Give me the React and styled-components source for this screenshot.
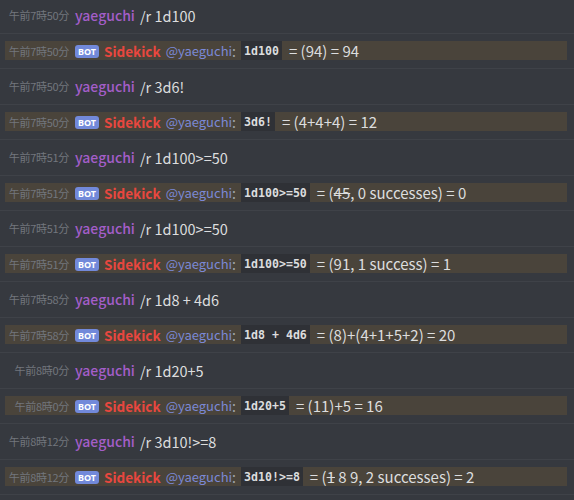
import React from "react"
import styled, { createGlobalStyle } from "styled-components"

const GlobalStyle = createGlobalStyle`
  html, body {
    margin: 0;
    padding: 0;
    background: #36393f;
    overflow: hidden;
  }
  body {
    font-family: "Noto Sans CJK JP", "Noto Sans", sans-serif;
  }
`

const Log = styled.div`
  width: 574px;
  height: 500px;
  overflow: hidden;
  background: #36393f;
`

const List = styled.div`
  margin-top: -2px;
`

const Row = styled.div`
  box-sizing: border-box;
  height: 35.5px;
  display: flex;
  align-items: center;
  padding: 0 7px 0 5px;
  border-bottom: 1px solid #3f4248;
`

const Band = styled.div`
  flex: 1;
  display: flex;
  align-items: center;
  height: 19px;
  background: ${(p) => (p.highlight ? "#4a443b" : "transparent")};
  white-space: nowrap;
`

const Time = styled.span`
  width: 64px;
  flex-shrink: 0;
  text-align: right;
  font-size: 11px;
  color: #72767d;
  margin-right: 6px;
  letter-spacing: -0.3px;
`

const UserName = styled.span`
  font-size: 14px;
  font-weight: 500;
  color: #a45ec9;
  margin-right: 5px;
`

const Text = styled.span`
  font-size: 14.5px;
  color: #dcddde;
`

const BotTag = styled.span`
  display: inline-flex;
  align-items: center;
  justify-content: center;
  height: 13px;
  padding: 0 3px;
  border-radius: 3px;
  background: #7289da;
  color: #fff;
  font-family: "Noto Sans", sans-serif;
  font-size: 9px;
  font-weight: 700;
  margin-right: 5px;
  margin-top: 1px;
`

const BotName = styled.span`
  font-size: 13.5px;
  font-weight: 700;
  color: #e8473f;
  margin-right: 5px;
`

const Mention = styled.span`
  font-size: 13px;
  color: #7b89d6;
`

const Colon = styled.span`
  font-size: 14px;
  color: #a3a6aa;
  margin-right: 5px;
`

const Code = styled.code`
  align-self: stretch;
  display: flex;
  align-items: center;
  padding: 0 3px;
  background: #2f3136;
  color: #dcddde;
  font-family: "DejaVu Sans Mono", monospace;
  font-size: 11.6px;
  font-weight: 700;
  white-space: pre;
`

const Result = styled.span`
  flex: 1;
  align-self: stretch;
  display: flex;
  align-items: center;
  padding-left: 7px;
  font-size: 15px;
  color: #dcddde;
  background: #4a443b;
  white-space: pre;
`

const Struck = styled.s`
  text-decoration-thickness: 1px;
`

const rows = [
  { time: "午前7時50分", cmd: "1d100", result: "= (94) = 94" },
  { time: "午前7時50分", cmd: "3d6!", result: "= (4+4+4) = 12" },
  {
    time: "午前7時51分",
    cmd: "1d100>=50",
    result: (
      <>
        = (<Struck>45</Struck>, 0 successes) = 0
      </>
    ),
  },
  { time: "午前7時51分", cmd: "1d100>=50", result: "= (91, 1 success) = 1" },
  { time: "午前7時58分", cmd: "1d8 + 4d6", result: "= (8)+(4+1+5+2) = 20" },
  { time: "午前8時0分", cmd: "1d20+5", result: "= (11)+5 = 16" },
  {
    time: "午前8時12分",
    cmd: "3d10!>=8",
    result: (
      <>
        = (<Struck>1</Struck> 8 9, 2 successes) = 2
      </>
    ),
  },
]

function UserLine({ time, cmd }) {
  return (
    <Row>
      <Band>
        <Time>{time}</Time>
        <UserName>yaeguchi</UserName>
        <Text>/r {cmd}</Text>
      </Band>
    </Row>
  )
}

function BotLine({ time, cmd, result }) {
  return (
    <Row>
      <Band highlight>
        <Time>{time}</Time>
        <BotTag>BOT</BotTag>
        <BotName>Sidekick</BotName>
        <Mention>@yaeguchi</Mention>
        <Colon>:</Colon>
        <Code>{cmd}</Code>
        <Result>{result}</Result>
      </Band>
    </Row>
  )
}

export default function App() {
  return (
    <Log>
      <GlobalStyle />
      <List>
        {rows.map((r, i) => (
          <React.Fragment key={i}>
            <UserLine time={r.time} cmd={r.cmd} />
            <BotLine time={r.time} cmd={r.cmd} result={r.result} />
          </React.Fragment>
        ))}
      </List>
    </Log>
  )
}
